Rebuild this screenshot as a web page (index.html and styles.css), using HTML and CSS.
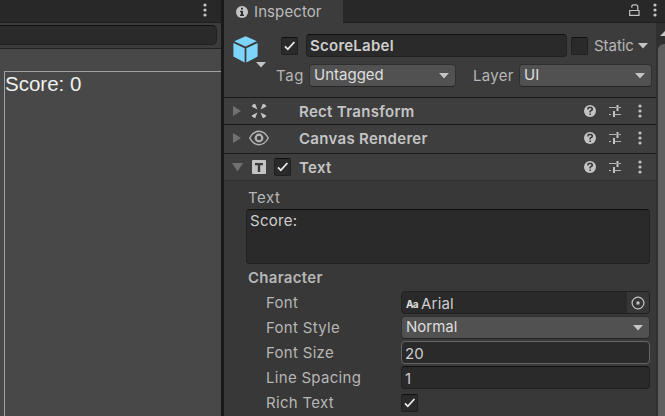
FILE: index.html
```html
<!DOCTYPE html>
<html lang="en">
<head>
<meta charset="utf-8">
<title>Inspector</title>
<link rel="stylesheet" href="styles.css">
</head>
<body>
<svg class="defs" width="0" height="0" aria-hidden="true">
  <symbol id="dots" viewBox="0 0 4 14"><circle cx="2" cy="2" r="1.6"/><circle cx="2" cy="7" r="1.6"/><circle cx="2" cy="12" r="1.6"/></symbol>
  <symbol id="down" viewBox="0 0 10 6"><path d="M0 0h10L5 5.5z"/></symbol>
  <symbol id="check" viewBox="0 0 12 10"><path d="M1 5.4 3.8 8.3 10.4 1" fill="none" stroke="#ececec" stroke-width="1.8"/></symbol>
  <symbol id="help" viewBox="0 0 12 12"><circle cx="6" cy="6" r="6"/><path d="M4 4.6V3.3L4.8 2.6H7.4L8.2 3.4V4.8L6.2 6.2V7.4M6.2 8.4V10" fill="none" stroke="#353535" stroke-width="1.5"/></symbol>
  <symbol id="preset" viewBox="0 0 12 12"><path d="M0 2.5h7M10 2.5h2M0 9.5h2M6 9.5h6" fill="none" stroke="#b4b4b4" stroke-width="1"/><path d="M7.5 0h2v6h-2zM4 6h2v6H4z"/></symbol>
</svg>
<div class="window">
  <section class="game">
    <div class="game-tabs"><svg class="dots"><use href="#dots"/></svg></div>
    <div class="toolbar"><div class="search"></div></div>
    <div class="viewport"><div class="canvas-rect"><span class="score">Score: 0</span></div></div>
  </section>
  <div class="splitter"></div>
  <section class="inspector">
    <div class="tabs">
      <div class="tab">
        <svg class="info" viewBox="0 0 12 12"><circle cx="6" cy="6" r="6"/><path d="M5 1.8h2v1.8H5zM4.1 4.8H7v3.7h1V10H4V8.5h1V6.2h-.9z" fill="#303030"/></svg>
        <span>Inspector</span>
      </div>
      <svg class="lock" viewBox="0 0 11 12"><path d="M.7 6.5h9.3v4.8H.7zM2.8 3.8V2.6Q2.8.8 4.8.8h2Q8.8.8 8.8 2.8v3.7" fill="none" stroke="#c4c4c4" stroke-width="1.2"/></svg>
      <svg class="dots"><use href="#dots"/></svg>
    </div>
    <div class="content">
      <div class="panel">
        <header class="object">
          <div class="object-icon">
            <svg class="cube" viewBox="0 0 25 27"><path d="M12.5.2 23.8 5.2 12.5 10.6 1.2 5.2zM.4 7 11.6 12.2V26.4L.4 20.6zM24.6 7 13.4 12.2V26.4l11.2-5.8z" fill="#7dd5fc"/></svg>
            <svg class="down cube-down"><use href="#down"/></svg>
          </div>
          <div class="object-fields">
            <div class="object-row name-row">
              <span class="box"><svg class="check"><use href="#check"/></svg></span>
              <span class="field name">ScoreLabel</span>
              <span class="box"></span>
              <span class="label static">Static</span>
              <svg class="down"><use href="#down"/></svg>
            </div>
            <div class="object-row">
              <span class="label tag">Tag</span>
              <span class="select tag-select">Untagged<svg class="down"><use href="#down"/></svg></span>
              <span class="label layer">Layer</span>
              <span class="select layer-select">UI<svg class="down"><use href="#down"/></svg></span>
            </div>
          </div>
        </header>
        <div class="component rect">
          <svg class="fold" viewBox="0 0 10 12"><path d="M1 1v10l8-5z"/></svg>
          <span class="kind"><svg width="16" height="16" viewBox="0 0 16 16"><path d="M.6 3.4Q1.4 1 4.2.8L6.4 6.4zM15.4 3.4Q14.6 1 11.8.8L9.6 6.4zM.6 12.6Q1.4 15 4.2 15.2L6.4 9.6zM15.4 12.6Q14.6 15 11.8 15.2L9.6 9.6z"/></svg></span>
          <span class="enable"></span>
          <strong>Rect Transform</strong>
          <svg class="help"><use href="#help"/></svg><svg class="preset"><use href="#preset"/></svg><svg class="dots"><use href="#dots"/></svg>
        </div>
        <div class="component renderer">
          <svg class="fold" viewBox="0 0 10 12"><path d="M1 1v10l8-5z"/></svg>
          <span class="kind"><svg width="20" height="16" viewBox="0 0 20 16"><g fill="none" stroke="#b4b4b4"><path d="M.7 8Q4.5 1.3 10 1.3T19.3 8Q15.5 14.7 10 14.7T.7 8z" stroke-width="1.4"/><circle cx="10" cy="8" r="3.3" stroke-width="2.2"/></g></svg></span>
          <span class="enable"></span>
          <strong>Canvas Renderer</strong>
          <svg class="help"><use href="#help"/></svg><svg class="preset"><use href="#preset"/></svg><svg class="dots"><use href="#dots"/></svg>
        </div>
        <div class="component text">
          <svg class="fold" viewBox="0 0 12 10"><path d="M0 1h11L5.5 9.5z"/></svg>
          <span class="kind"><svg width="14" height="14" viewBox="0 0 14 14"><rect width="14" height="14" rx="1"/><path d="M3 3h8v2.2H8.2V12H5.8V5.2H3z" fill="#3c3c3c"/></svg></span>
          <span class="enable"><span class="box"><svg class="check"><use href="#check"/></svg></span></span>
          <strong>Text</strong>
          <svg class="help"><use href="#help"/></svg><svg class="preset"><use href="#preset"/></svg><svg class="dots"><use href="#dots"/></svg>
        </div>
        <div class="properties">
          <div class="label text-label">Text</div>
          <div class="field textarea">Score:</div>
          <div class="label group">Character</div>
          <div class="property"><span class="label">Font</span><span class="field object-field"><b class="aa">Aa</b><span>Arial</span><i class="picker"><svg width="14" height="14" viewBox="0 0 14 14"><circle cx="7" cy="7" r="5.9" fill="none" stroke="#c4c4c4" stroke-width="1.2"/><rect x="5.5" y="5.5" width="3" height="3" rx=".6"/></svg></i></span></div>
          <div class="property"><span class="label">Font Style</span><span class="select">Normal<svg class="down"><use href="#down"/></svg></span></div>
          <div class="property"><span class="label">Font Size</span><span class="field hover">20</span></div>
          <div class="property"><span class="label">Line Spacing</span><span class="field">1</span></div>
          <div class="property"><span class="label">Rich Text</span><span class="box"><svg class="check"><use href="#check"/></svg></span></div>
        </div>
      </div>
      <div class="scrollbar"><svg class="up" viewBox="0 0 12 6"><path d="M6 0 12 6H0z"/></svg><div class="thumb"></div></div>
    </div>
  </section>
</div>
</body>
</html>
```
FILE: styles.css
```css
* { box-sizing: border-box; }
body {
  margin: 0;
  width: 665px;
  height: 416px;
  overflow: hidden;
  background: #383838;
  color: #c4c4c4;
  font: 15px/20px Inter, "Liberation Sans", sans-serif;
  letter-spacing: .3px;
  white-space: nowrap;
}
svg { display: block; flex: none; fill: #c4c4c4; }
.defs { position: absolute; }
.dots { width: 4px; height: 14px; }
.down { width: 10px; height: 6px; }
.check { width: 12px; height: 10px; }
.help, .preset { width: 12px; height: 12px; }

.window { display: grid; grid-template-columns: 221px 3px 441px; height: 416px; }
.splitter { background: #191919; }

.game { display: flex; flex-direction: column; overflow: hidden; }
.game-tabs { height: 23px; padding: 3px 0 0 203px; background: #282828; border-bottom: 1px solid #1f1f1f; }
.toolbar { height: 26px; padding-top: 2px; background: #3c3c3c; border-bottom: 1px solid #232323; }
.search { width: 217px; height: 20px; background: #2a2a2a; border: 1px solid #202020; border-top-color: #101010; border-left: 0; border-radius: 0 5px 5px 0; }
.viewport { flex: 1; padding: 22px 0 0 4px; background: #484848; }
.canvas-rect { height: 100%; border: solid #a0a0a0; border-width: 1px 0 0 1px; }
.score { display: block; color: #f0f0f0; font: 20.5px/23px "Liberation Sans", Arial, sans-serif; letter-spacing: 0; }

.inspector { display: flex; flex-direction: column; overflow: hidden; }
.tabs { display: flex; flex: none; height: 23px; background: #282828; box-shadow: inset 0 -1px #202020; }
.tab { display: flex; gap: 6px; width: 119px; padding: 2px 0 0 12px; background: #3c3c3c; letter-spacing: .1px; color: #bababa; }
.info { width: 12px; height: 12px; margin-top: 4px; }
.lock { width: 11px; height: 12px; margin: 4px 0 0 286px; }
.tabs .dots { margin: 3px 0 0 13px; }
.content { display: grid; grid-template-columns: 432px 9px; flex: 1; min-height: 0; }
.panel { overflow: hidden; }
.label { color: #b6b6b6; }

.object { display: flex; height: 74px; padding: 11px 0 0 9px; background: #3c3c3c; }
.object-icon { width: 44px; padding-top: 2px; }
.cube { width: 25px; height: 27px; }
.cube-down { margin: -1px 0 0 23px; }
.object-row { display: flex; height: 30px; }
.name-row > .box { margin-top: 3px; margin-left: 4px; }
.name { width: 261px; margin-left: 8px; font-weight: 600; letter-spacing: .25px; }
.static { width: 44px; margin: 2px 0 0 6px; letter-spacing: -.05px; }
.name-row > .down { margin-top: 9px; }
.tag { width: 33px; margin: 2px 0 0 -1px; letter-spacing: .6px; }
.tag-select { width: 147px; letter-spacing: 0; }
.layer { width: 46px; margin: 2px 0 0 17px; }
.layer-select { width: 133px; letter-spacing: 0; }

.box { display: flex; flex: none; align-items: center; justify-content: center; width: 17px; height: 18px; background: #2a2a2a; border: 1px solid #202020; border-top-color: #101010; border-radius: 2px; }
.field { display: block; height: 23px; padding: 1px 3px; background: #2a2a2a; border: 1px solid #202020; border-top-color: #101010; border-radius: 4px; color: #cecece; }
.field.hover { padding-top: 2px; border-color: #656565; }
.select { display: flex; align-items: center; justify-content: space-between; height: 23px; padding: 0 6px 2px 4px; background: #515151; border: 1px solid #303030; border-bottom-color: #242424; border-radius: 4px; color: #dedede; }
.select .down { margin-top: 3px; }

.component { display: flex; align-items: center; padding: 0 14px 0 8px; background: #3e3e3e; border-top: 1px solid #1a1a1a; }
.rect { height: 27px; }
.renderer { height: 29px; }
.renderer > * { margin-bottom: 2px; }
.text { height: 28px; border-bottom: 1px solid #303030; }
.fold { width: 10px; height: 12px; fill: #717171; }
.text .fold { width: 12px; height: 10px; margin-right: -2px; }
.kind { display: flex; justify-content: center; width: 20px; margin-left: 7px; }
.enable { width: 30px; padding-left: 5px; }
.component strong { flex: 1; padding-top: 2px; font-weight: 600; }
.component .preset { margin-left: 13px; }
.component .dots { margin-left: 17px; }

.properties { padding: 7px 6px 0 22px; }
.text-label { padding-left: 2px; margin-bottom: 1px; letter-spacing: .5px; }
.textarea { height: 55px; width: 404px; }
.group { margin: 4px 0 3px 2px; font-weight: 600; }
.property { display: grid; grid-template-columns: 135px 249px; height: 25px; margin-left: 20px; }
.property > .label { margin-top: 2px; }
.property > .field { padding-top: 2px; letter-spacing: .2px; }
.property > .select { letter-spacing: 0; }
.property > .object-field { display: flex; padding: 2px 0 0 4px; border-top-color: #202020; }
.aa { width: 15px; font-size: 10px; letter-spacing: -.6px; line-height: 20px; color: #e0e0e0; }
.picker { display: flex; align-items: center; justify-content: center; width: 22px; margin: -2px 0 0 auto; background: #363636; border-radius: 0 3px 3px 0; }
.property > .box { margin-top: 3px; }

.scrollbar { display: flex; flex-direction: column; background: #303030; overflow: hidden; }
.up { width: 12px; height: 6px; margin: 7px 0 8px 4px; }
.thumb { flex: 1; width: 14px; margin-left: 2px; background: #5f5f5f; border-radius: 6px 6px 0 0; }
```
